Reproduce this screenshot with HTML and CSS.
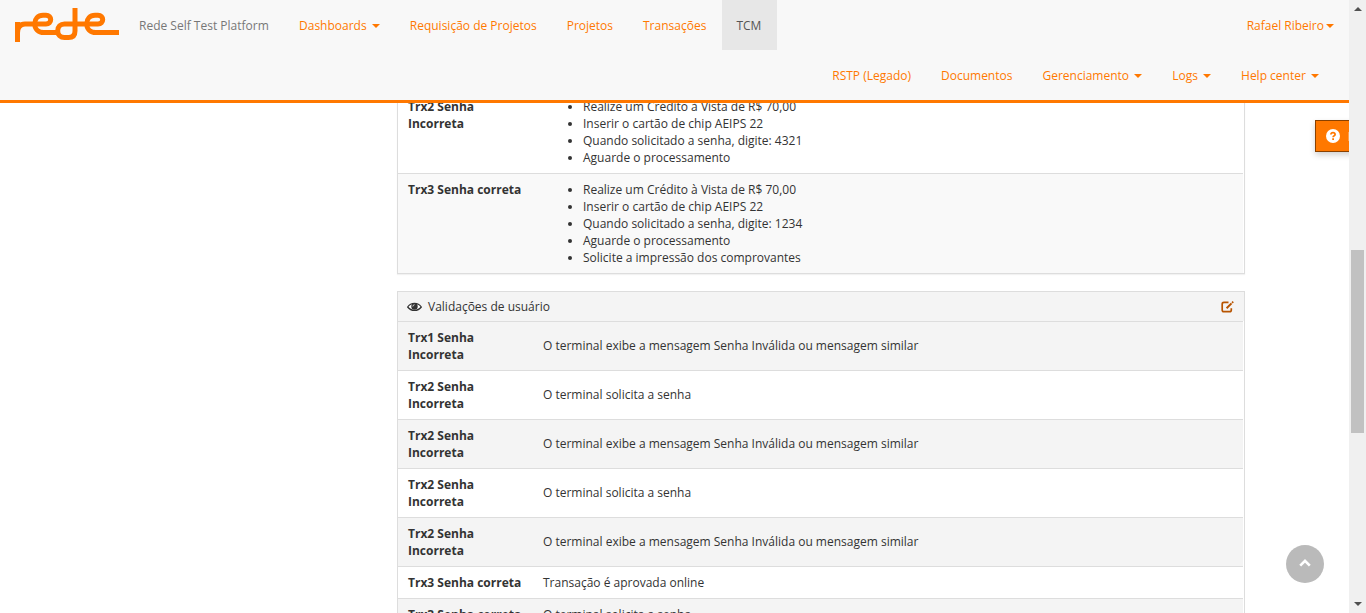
FILE: index.html
```html
<!DOCTYPE html>
<html lang="pt-BR">
<head>
<meta charset="utf-8">
<title>Rede Self Test Platform</title>
<link rel="stylesheet" href="styles.css">
</head>
<body>
<div class="app">
  <div class="page">
    <header class="header">
      <div class="bar">
        <svg class="logo" width="105" height="36" viewBox="0 0 105 36" fill="none" stroke="#ff7800" stroke-width="5">
          <path d="M2.500 34V14M2.500 25C2.500 19 5 16 10 16H31C34 16 35.700 14.200 35.700 11.600S34 7.300 31 7.300H28C23 7.300 19.700 11 19.700 15.800S23 24.600 29 24.600H43"/>
          <path d="M60 0V23C60 27.500 57.500 29.600 53.500 29.600H49.500C45.500 29.600 42.700 27 42.700 22.800S45.500 16 49.500 16H83C86 16 87.700 14.200 87.700 11.600S86 7.300 83 7.300H80C75 7.300 71.700 11 71.700 15.800S75 24.600 81 24.600H104"/>
        </svg>
        <span class="brand">Rede Self Test Platform</span>
        <nav class="nav">
          <a>Dashboards <i class="caret"></i></a>
          <a>Requisição de Projetos</a>
          <a>Projetos</a>
          <a>Transações</a>
          <a class="active">TCM</a>
        </nav>
        <a class="user">Rafael Ribeiro<i class="caret"></i></a>
      </div>
      <nav class="nav secondary">
        <a>RSTP (Legado)</a>
        <a>Documentos</a>
        <a>Gerenciamento <i class="caret"></i></a>
        <a>Logs <i class="caret"></i></a>
        <a>Help center <i class="caret"></i></a>
      </nav>
    </header>
    <main class="content">
      <section class="panel steps">
        <div class="row">
          <strong>Trx2 Senha Incorreta</strong>
          <ul>
            <li>Realize um Crédito à Vista de R$ 70,00</li>
            <li>Inserir o cartão de chip AEIPS 22</li>
            <li>Quando solicitado a senha, digite: 4321</li>
            <li>Aguarde o processamento</li>
          </ul>
        </div>
        <div class="row shaded">
          <strong>Trx3 Senha correta</strong>
          <ul>
            <li>Realize um Crédito à Vista de R$ 70,00</li>
            <li>Inserir o cartão de chip AEIPS 22</li>
            <li>Quando solicitado a senha, digite: 1234</li>
            <li>Aguarde o processamento</li>
            <li>Solicite a impressão dos comprovantes</li>
          </ul>
        </div>
      </section>
      <section class="panel checks">
        <div class="heading">
          <svg class="eye" width="15" height="10" viewBox="0 0 15 10">
            <path d="M.7 5C4 .2 11 .2 14.300 5C11 9.500 4 9.500 .7 5Z" fill="#fff" stroke="#333" stroke-width="1.300"/>
            <circle cx="7.500" cy="4.500" r="3.200" fill="#333"/>
            <path d="M5.800 4.500Q6 2.800 7.500 2.700" fill="none" stroke="#fff" stroke-width=".8"/>
          </svg>
          <span>Validações de usuário</span>
          <svg class="edit" width="13" height="12" viewBox="0 0 13 12" fill="none" stroke="#b85400">
            <path d="M7.500 1.400H3Q1.200 1.400 1.200 3V9Q1.200 10.700 3 10.700H8.500Q10.300 10.700 10.300 9V7.200" stroke-width="1.700"/>
            <path d="M5.600 7.300L10.500 2.400" stroke-width="2"/>
            <path d="M11.100 1.800L12.200 .7" stroke-width="1.800"/>
          </svg>
        </div>
        <div class="row shaded"><strong>Trx1 Senha Incorreta</strong><span>O terminal exibe a mensagem Senha Inválida ou mensagem similar</span></div>
        <div class="row"><strong>Trx2 Senha Incorreta</strong><span>O terminal solicita a senha</span></div>
        <div class="row shaded"><strong>Trx2 Senha Incorreta</strong><span>O terminal exibe a mensagem Senha Inválida ou mensagem similar</span></div>
        <div class="row"><strong>Trx2 Senha Incorreta</strong><span>O terminal solicita a senha</span></div>
        <div class="row shaded"><strong>Trx2 Senha Incorreta</strong><span>O terminal exibe a mensagem Senha Inválida ou mensagem similar</span></div>
        <div class="row"><strong>Trx3 Senha correta</strong><span>Transação é aprovada online</span></div>
        <div class="row shaded"><strong>Trx3 Senha correta</strong><span>O terminal solicita a senha</span></div>
      </section>
    </main>
    <div class="help">
      <svg width="14" height="14" viewBox="0 0 14 14"><circle cx="7" cy="7" r="7" fill="#fff"/><path d="M4.900 5.500Q5 3.700 7 3.700T9.100 5.400Q9.100 6.300 7.900 6.900Q7.100 7.300 7.100 8.200" fill="none" stroke="#ff7800" stroke-width="1.700"/><path d="M6.200 9.200H8V10.900H6.200Z" fill="#ff7800"/></svg>
      <i class="sliver"></i>
    </div>
    <div class="to-top">
      <svg width="12" height="8" viewBox="0 0 12 8"><path d="M1.200 6.600L6 1.900L10.800 6.600" fill="none" stroke="#fff" stroke-width="2.700"/></svg>
    </div>
  </div>
  <div class="scrollbar">
    <i class="arrow up"></i>
    <i class="thumb"></i>
    <i class="arrow down"></i>
  </div>
</div>
</body>
</html>
```
FILE: styles.css
```css
* { box-sizing: border-box; }
body {
  margin: 0;
  font: 12px/17px "Open Sans", sans-serif;
  color: #333;
  background: #fff;
}
.app { display: flex; height: 613px; overflow: hidden; }
.page {
  position: relative;
  display: flex;
  flex-direction: column;
  width: 1349px;
  overflow: hidden;
}
.header {
  flex: none;
  height: 103px;
  background: #f8f8f8;
  border-bottom: 3px solid #ff7800;
  color: #ff7800;
}
.bar { display: flex; height: 50px; line-height: 51px; }
.logo { flex: none; margin: 8px 5px 0 15px; }
.brand { width: 159px; padding-left: 14px; color: #777; white-space: nowrap; }
.nav { display: flex; white-space: nowrap; }
.nav a { height: 50px; padding: 0 15px; }
.nav .active { width: 55px; margin-left: .6px; padding-left: 14.5px; background: #e7e7e7; color: #555; }
.user { margin-left: auto; padding-right: 15px; }
.secondary { justify-content: flex-end; padding-right: 15px; line-height: 51px; }
.caret {
  display: inline-block;
  margin: 0 0 2px 2px;
  vertical-align: middle;
  border: 4px solid transparent;
  border-top-color: #ff7800;
  border-bottom: 0;
}
.content { flex: 1; min-height: 0; padding-left: 397px; overflow: hidden; }
.panel { width: 848px; border: 1px solid #ddd; }
.steps { margin: -13px 0 17px; box-shadow: 0 1px 1px rgba(0, 0, 0, .05); }
.row { display: flex; margin-right: 1px; padding: 7px 10px; border-top: 1px solid #ddd; }
.row strong { flex: none; width: 135px; padding-right: 20px; }
.steps .shaded { background: #f9f9f9; }
.checks .shaded { background: #f4f4f4; }
.checks .row { align-items: center; }
.checks .row span { padding-bottom: 1px; margin-bottom: -.1px; }
.checks .row:nth-last-child(-n+2) span { padding-bottom: 0; margin-bottom: 0; }
.row:first-child { border-top: 0; }
ul { margin: 0; padding-left: 40px; }
.heading {
  display: flex;
  align-items: center;
  height: 29px;
  padding: 0 10px 0 9px;
  background: #f4f4f4;
}
.eye { margin-right: 6px; }
.edit { margin: 1px 0 0 auto; }
.help {
  position: absolute;
  left: 1315px;
  top: 120px;
  display: flex;
  align-items: center;
  width: 40px;
  height: 32px;
  padding-left: 10px;
  background: #ff7800;
  border: 1px solid #8a4100;
  box-shadow: 0 3px 6px rgba(0, 0, 0, .18);
}
.sliver { width: 1px; height: 9px; margin-left: 8px; background: #ffa04d; }
.to-top {
  position: absolute;
  left: 1286px;
  top: 545px;
  display: grid;
  place-items: center;
  width: 38px;
  height: 38px;
  border-radius: 50%;
  background: #bababa;
}
.to-top svg { margin-bottom: 2px; }
.scrollbar {
  display: flex;
  flex-direction: column;
  align-items: center;
  width: 17px;
  padding: 7px 0;
  background: #f0f0f0;
}
.arrow { border: 4px solid transparent; }
.up { border-top: 0; border-bottom-color: #505050; }
.down { margin-top: auto; border-bottom: 0; border-top-color: #505050; }
.thumb { width: 13px; height: 183px; margin-top: 239px; background: #c1c1c1; }
```
